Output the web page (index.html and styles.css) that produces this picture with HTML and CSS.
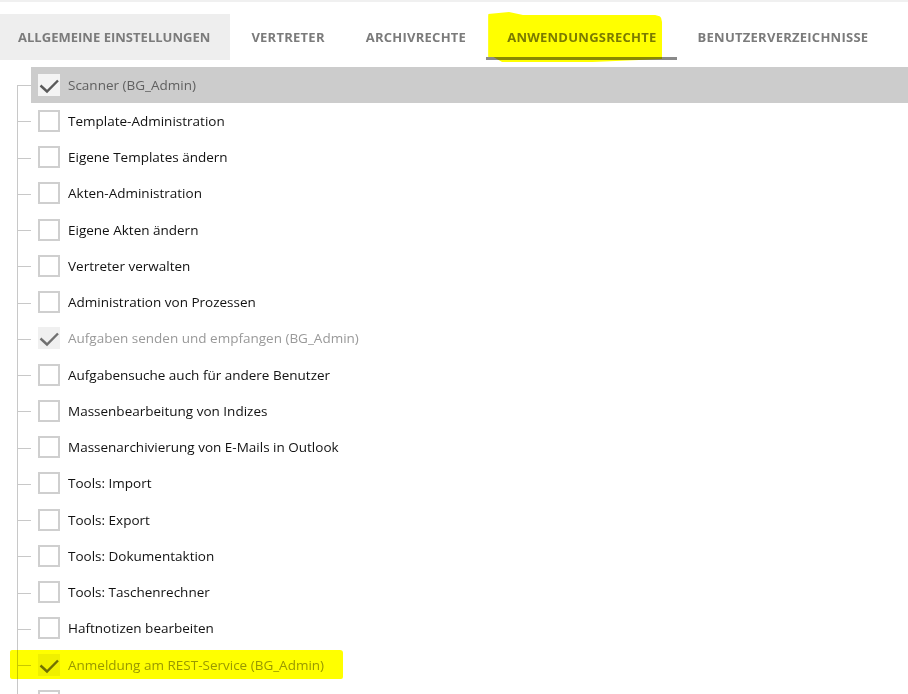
FILE: index.html
```html
<!DOCTYPE html>
<html lang="de">
<head>
<meta charset="utf-8">
<title>Anwendungsrechte</title>
<link rel="stylesheet" href="styles.css">
</head>
<body>
<div class="page">
  <nav class="tabs">
    <div class="tab tab-active-bg">ALLGEMEINE EINSTELLUNGEN</div>
    <div class="tab">VERTRETER</div>
    <div class="tab">ARCHIVRECHTE</div>
    <div class="tab tab-selected">ANWENDUNGSRECHTE<span class="marker marker-tab"></span></div>
    <div class="tab">BENUTZERVERZEICHNISSE</div>
  </nav>
  <ul class="tree">
    <li class="row first selected"><span class="branch"></span><div class="item"><span class="box checked"><svg viewBox="0 0 22 22"><path d="M2.5 11.5 L9 17.5 L20 6.5"/></svg></span><span class="label">Scanner (BG_Admin)</span></div></li>
    <li class="row"><span class="branch"></span><div class="item"><span class="box"></span><span class="label">Template-Administration</span></div></li>
    <li class="row"><span class="branch"></span><div class="item"><span class="box"></span><span class="label">Eigene Templates ändern</span></div></li>
    <li class="row"><span class="branch"></span><div class="item"><span class="box"></span><span class="label">Akten-Administration</span></div></li>
    <li class="row"><span class="branch"></span><div class="item"><span class="box"></span><span class="label">Eigene Akten ändern</span></div></li>
    <li class="row"><span class="branch"></span><div class="item"><span class="box"></span><span class="label">Vertreter verwalten</span></div></li>
    <li class="row"><span class="branch"></span><div class="item"><span class="box"></span><span class="label">Administration von Prozessen</span></div></li>
    <li class="row disabled"><span class="branch"></span><div class="item"><span class="box checked"><svg viewBox="0 0 22 22"><path d="M2.5 11.5 L9 17.5 L20 6.5"/></svg></span><span class="label">Aufgaben senden und empfangen (BG_Admin)</span></div></li>
    <li class="row"><span class="branch"></span><div class="item"><span class="box"></span><span class="label">Aufgabensuche auch für andere Benutzer</span></div></li>
    <li class="row"><span class="branch"></span><div class="item"><span class="box"></span><span class="label">Massenbearbeitung von Indizes</span></div></li>
    <li class="row"><span class="branch"></span><div class="item"><span class="box"></span><span class="label">Massenarchivierung von E-Mails in Outlook</span></div></li>
    <li class="row"><span class="branch"></span><div class="item"><span class="box"></span><span class="label">Tools: Import</span></div></li>
    <li class="row"><span class="branch"></span><div class="item"><span class="box"></span><span class="label">Tools: Export</span></div></li>
    <li class="row"><span class="branch"></span><div class="item"><span class="box"></span><span class="label">Tools: Dokumentaktion</span></div></li>
    <li class="row"><span class="branch"></span><div class="item"><span class="box"></span><span class="label">Tools: Taschenrechner</span></div></li>
    <li class="row"><span class="branch"></span><div class="item"><span class="box"></span><span class="label">Haftnotizen bearbeiten</span></div></li>
    <li class="row disabled marked"><span class="marker marker-row"></span><span class="branch"></span><div class="item"><span class="box checked"><svg viewBox="0 0 22 22"><path d="M2.5 11.5 L9 17.5 L20 6.5"/></svg></span><span class="label">Anmeldung am REST-Service (BG_Admin)</span></div></li>
    <li class="row"><span class="branch"></span><div class="item"><span class="box"></span><span class="label"></span></div></li>
  </ul>
</div>
</body>
</html>
```

FILE: styles.css
```css
* { box-sizing: border-box; }
html, body { margin: 0; padding: 0; background: #fff; }
body {
  font-family: "Open Sans", "Noto Sans", "DejaVu Sans", sans-serif;
  width: 908px;
  height: 694px;
  overflow: hidden;
}
.page {
  border-top: 2px solid #f0f0f0;
  padding-top: 12px;
}
.tabs {
  display: flex;
  height: 46px;
}
.tab {
  position: relative;
  display: flex;
  align-items: center;
  padding: 0 20px 1px 18px;
  font-size: 13px;
  font-weight: 700;
  color: #7b7b7b;
  letter-spacing: 0.25px;
}
.tab + .tab { padding-left: 21px; }
.tab-active-bg {
  background: #eeeeee;
  letter-spacing: 0.02px;
}
.tab-selected {
  box-shadow: inset 0 -3px 0 #8a8a8a;
}
.marker {
  position: absolute;
  background: #ffff00;
  mix-blend-mode: multiply;
  pointer-events: none;
}
.marker-tab {
  left: 2px;
  top: -2px;
  width: 174px;
  height: 50px;
  border-radius: 4px 10px 3px 6px;
  clip-path: polygon(0 4%, 12% 0, 20% 6%, 96% 6%, 100% 10%, 100% 94%, 60% 100%, 8% 100%, 3% 90%, 0 90%);
}
.tree {
  list-style: none;
  margin: 7px 0 0;
  padding: 0 0 0 17px;
}
.row {
  position: relative;
  display: flex;
  height: 36.25px;
}
.branch {
  flex: 0 0 14px;
  position: relative;
  border-left: 1px solid #c8c8c8;
}
.branch::after {
  content: "";
  position: absolute;
  left: 0;
  right: 0;
  top: 50%;
  border-top: 1px solid #c8c8c8;
}
.first .branch {
  border-left: none;
}
.first .branch::before {
  content: "";
  position: absolute;
  left: 0;
  top: 50%;
  bottom: 0;
  border-left: 1px solid #c8c8c8;
}
.item {
  flex: 1;
  display: flex;
  align-items: center;
  padding-left: 7px;
  padding-bottom: 1px;
  gap: 8px;
}
.selected .item { background: #cccccc; }
.box {
  flex: 0 0 22px;
  width: 22px;
  height: 22px;
  border: 2px solid #cfcfcf;
  background: #fff;
}
.box.checked {
  border: none;
  background: #f0f0f0;
  display: flex;
}
.selected .box.checked { background: #f4f4f4; }
.box svg {
  width: 22px;
  height: 22px;
  fill: none;
  stroke: #5a5a5a;
  stroke-width: 2.4;
}
.disabled .box svg { stroke: #707070; }
.label {
  font-size: 13.5px;
  color: #111111;
  white-space: nowrap;
}
.selected .label { color: #606060; }
.disabled .label { color: #999999; }
.marked { z-index: 1; }
.marker-row {
  left: -7px;
  top: 3px;
  width: 333px;
  height: 29px;
  border-radius: 2px 3px 2px 2px;
  z-index: 2;
}
```
